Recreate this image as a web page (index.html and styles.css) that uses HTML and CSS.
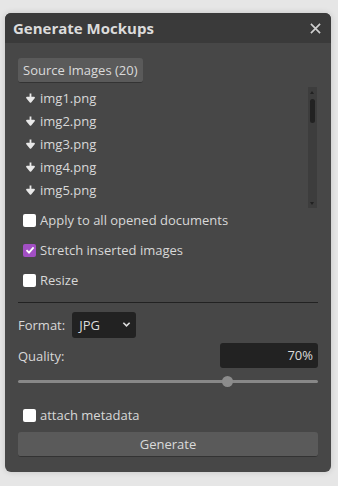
FILE: index.html
```html
<!DOCTYPE html>
<html lang="en">
<head>
  <meta charset="UTF-8" />
  <title>Generate Mockups</title>
  <link rel="stylesheet" href="styles.css">
</head>
<body>

<div class="panel">
  <div class="titlebar">
    <span class="title">Generate Mockups</span>
    <svg class="close" viewBox="0 0 12 12" width="11" height="11"><path d="M1 1 L11 11 M11 1 L1 11" stroke="#d0d0d0" stroke-width="1.8"/></svg>
  </div>

  <div class="content">
    <button class="btn source">Source Images (20)</button>

    <div class="list-wrap">
      <ul class="files">
        <li><svg class="arrow" viewBox="0 0 9 10" width="9" height="10"><path d="M4.5 0.5 V6 M1 4.6 L4.5 8.8 L8 4.6 Z" fill="#e8e8e8" stroke="#e8e8e8" stroke-width="1.8" stroke-linejoin="round"/></svg>img1.png</li>
        <li><svg class="arrow" viewBox="0 0 9 10" width="9" height="10"><path d="M4.5 0.5 V6 M1 4.6 L4.5 8.8 L8 4.6 Z" fill="#e8e8e8" stroke="#e8e8e8" stroke-width="1.8" stroke-linejoin="round"/></svg>img2.png</li>
        <li><svg class="arrow" viewBox="0 0 9 10" width="9" height="10"><path d="M4.5 0.5 V6 M1 4.6 L4.5 8.8 L8 4.6 Z" fill="#e8e8e8" stroke="#e8e8e8" stroke-width="1.8" stroke-linejoin="round"/></svg>img3.png</li>
        <li><svg class="arrow" viewBox="0 0 9 10" width="9" height="10"><path d="M4.5 0.5 V6 M1 4.6 L4.5 8.8 L8 4.6 Z" fill="#e8e8e8" stroke="#e8e8e8" stroke-width="1.8" stroke-linejoin="round"/></svg>img4.png</li>
        <li><svg class="arrow" viewBox="0 0 9 10" width="9" height="10"><path d="M4.5 0.5 V6 M1 4.6 L4.5 8.8 L8 4.6 Z" fill="#e8e8e8" stroke="#e8e8e8" stroke-width="1.8" stroke-linejoin="round"/></svg>img5.png</li>
      </ul>
      <div class="scrollbar">
        <span class="sb-up"></span>
        <span class="sb-thumb"></span>
        <span class="sb-down"></span>
      </div>
    </div>

    <label class="check first"><span class="box"></span>Apply to all opened documents</label>
    <label class="check"><span class="box on"><svg viewBox="0 0 10 10" width="10" height="10"><path d="M1.5 5.2 L4 7.6 L8.6 2.4" fill="none" stroke="#fff" stroke-width="1.8"/></svg></span>Stretch inserted images</label>
    <label class="check"><span class="box"></span>Resize</label>

    <hr class="sep" />

    <div class="row">
      <span class="lbl">Format:</span>
      <div class="select">JPG <svg viewBox="0 0 10 10" width="9" height="9"><path d="M1.5 3 L5 6.5 L8.5 3" fill="none" stroke="#ddd" stroke-width="1.8"/></svg></div>
    </div>

    <div class="row between">
      <span class="lbl">Quality:</span>
      <div class="num">70%</div>
    </div>

    <div class="slider">
      <div class="track"></div>
      <div class="thumb" style="left: 69.5%"></div>
    </div>

    <label class="check meta"><span class="box"></span>attach metadata</label>

    <button class="btn generate">Generate</button>
  </div>
</div>

</body>
</html>
```

FILE: styles.css
```css
body {
  margin: 0;
  background: #e6e6e6;
  font-family: "Open Sans", Arial, sans-serif;
  width: 338px;
  height: 486px;
  overflow: hidden;
}
.panel {
  margin: 13px 0 0 5px;
  width: 326px;
  height: 459px;
  background: #474747;
  border-radius: 6px;
  overflow: hidden;
  box-shadow: 0 0 6px rgba(0,0,0,0.15);
}
.titlebar {
  height: 30px;
  background: #3a3a3a;
  display: flex;
  align-items: center;
  justify-content: space-between;
  padding: 0 10px 0 8px;
}
.title {
  color: #dcdcdc;
  font-weight: bold;
  font-size: 15px;
}
.content {
  padding: 15px 13px 0 13px;
  color: #d8d8d8;
  font-size: 13px;
}
.btn {
  font-family: inherit;
  font-size: 13px;
  color: #dadada;
  background: #5a5a5a;
  border: none;
  border-radius: 3px;
  border-bottom: 1px solid #333;
  cursor: pointer;
}
.source {
  height: 25px;
  padding: 0 5px;
  display: block;
}
.list-wrap {
  display: flex;
  justify-content: space-between;
  margin-top: 4px;
  height: 121px;
}
.files {
  list-style: none;
  margin: 0;
  padding: 0 0 0 8px;
}
.files li {
  height: 22.8px;
  display: flex;
  align-items: center;
}
.arrow {
  margin-right: 5px;
}
.scrollbar {
  width: 9px;
  margin-right: 1px;
  background: #3d3d3d;
  position: relative;
}
.sb-thumb {
  position: absolute;
  left: 2px;
  top: 12px;
  width: 5px;
  height: 24px;
  border-radius: 3px;
  background: #222;
}
.sb-up, .sb-down {
  position: absolute;
  left: 2px;
  width: 0;
  height: 0;
  border-left: 2.5px solid transparent;
  border-right: 2.5px solid transparent;
}
.sb-up {
  top: 4px;
  border-bottom: 3px solid #222;
}
.sb-down {
  bottom: 3px;
  border-top: 3px solid #222;
}
.check {
  display: flex;
  align-items: center;
  height: 30px;
  padding-left: 5px;
}
.check.first {
  margin-top: -3px;
}
.box {
  width: 13px;
  height: 13px;
  background: #fff;
  border-radius: 2px;
  margin-right: 4px;
  display: flex;
  align-items: center;
  justify-content: center;
}
.box.on {
  background: #a24fc4;
}
.sep {
  border: none;
  border-top: 1px solid #222;
  margin: 7px 0 8px 0;
}
.row {
  display: flex;
  align-items: center;
  height: 27px;
  margin-bottom: 4px;
}
.row.between {
  justify-content: space-between;
}
.lbl {
  margin-right: 7px;
}
.select {
  background: #222;
  border-radius: 3px;
  width: 52px;
  height: 26px;
  padding: 0 5px 0 7px;
  display: flex;
  align-items: center;
  justify-content: space-between;
  color: #dcdcdc;
}
.num {
  background: #222;
  border-radius: 3px;
  width: 93px;
  height: 25px;
  line-height: 25px;
  padding-right: 5px;
  text-align: right;
  color: #dcdcdc;
}
.slider {
  position: relative;
  height: 20px;
}
.track {
  position: absolute;
  left: 0;
  right: 0;
  top: 7px;
  height: 3px;
  background: #888;
  border-radius: 2px;
}
.thumb {
  position: absolute;
  top: 3px;
  width: 11px;
  height: 11px;
  margin-left: -5px;
  border-radius: 50%;
  background: #8c8c8c;
}
.check.meta {
  margin-top: 12px;
  height: 20px;
}
.generate {
  display: block;
  width: 100%;
  height: 25px;
  margin-top: 7px;
}
```
